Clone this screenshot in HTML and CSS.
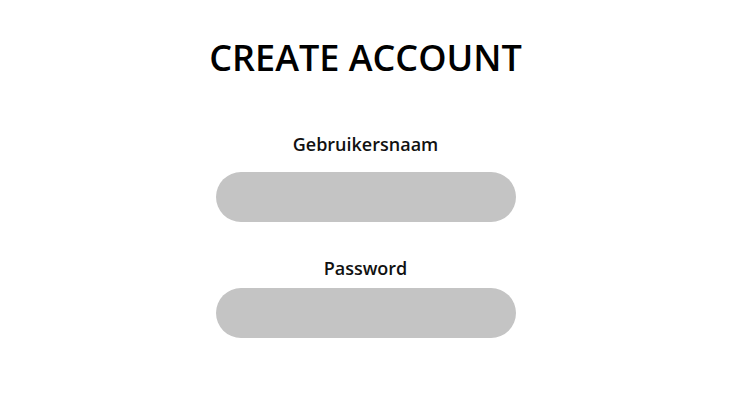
FILE: index.html
```html
<!DOCTYPE html>
<html>
<head>
<meta charset="utf-8">
<link rel="stylesheet" href="styles.css">
</head>
<body>
<main class="page">
  <h1 class="title">CREATE ACCOUNT</h1>
  <form class="form">
    <label class="label label-first" for="user">Gebruikersnaam</label>
    <input class="field" id="user" type="text">
    <label class="label label-second" for="pass">Password</label>
    <input class="field field-second" id="pass" type="password">
  </form>
</main>
</body>
</html>
```
FILE: styles.css
```css
html, body {
  margin: 0;
  padding: 0;
  background: #ffffff;
}
.page {
  display: flex;
  flex-direction: column;
  align-items: center;
  font-family: "Open Sans", sans-serif;
  color: #000;
}
.title {
  margin: 33px 0 0;
  font-size: 36px;
  line-height: 49px;
  font-weight: 600;
}
.form {
  display: flex;
  flex-direction: column;
  align-items: center;
  margin-top: 50px;
}
.label {
  font-size: 18px;
  line-height: 25px;
  font-weight: 600;
  color: #111;
}
.field {
  box-sizing: border-box;
  width: 300px;
  height: 50px;
  border: none;
  border-radius: 25px;
  background: #c4c4c4;
  margin-top: 15px;
  outline: none;
}
.label-second {
  margin-top: 34px;
}
.field-second {
  margin-top: 7px;
}
```
